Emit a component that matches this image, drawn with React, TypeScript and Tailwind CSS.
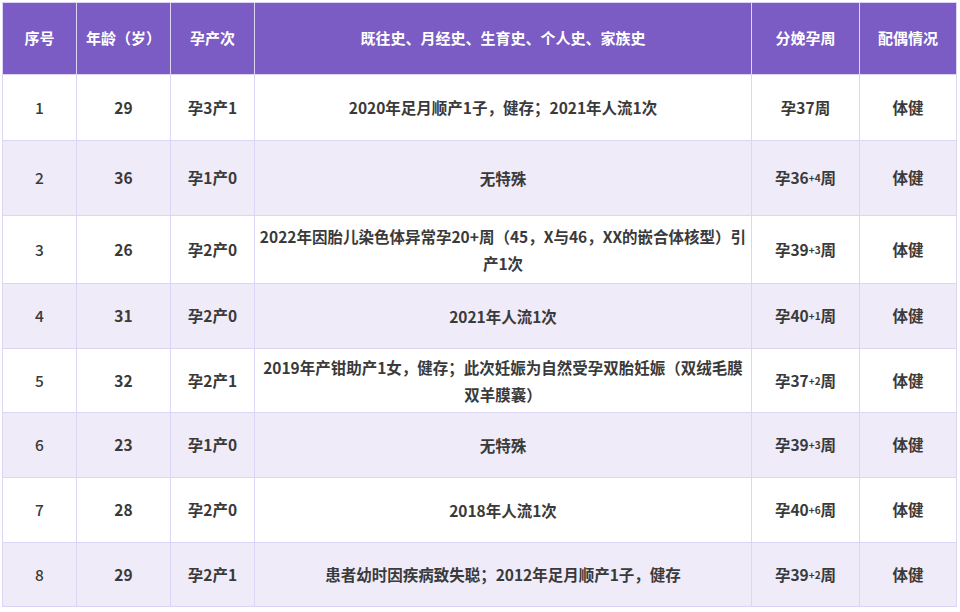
import React from 'react'

interface Row {
  no: number;
  age: number;
  gp: string;
  history: string;
  week: number;
  plus?: number;
  spouse: string;
  h: string;
}

const rows: Row[] = [
  { no: 1, age: 29, gp: '孕3产1', history: '2020年足月顺产1子，健存；2021年人流1次', week: 37, spouse: '体健', h: 'h-[66px]' },
  { no: 2, age: 36, gp: '孕1产0', history: '无特殊', week: 36, plus: 4, spouse: '体健', h: 'h-[75px]' },
  { no: 3, age: 26, gp: '孕2产0', history: '2022年因胎儿染色体异常孕20+周（45，X与46，XX的嵌合体核型）引产1次', week: 39, plus: 3, spouse: '体健', h: 'h-[68px]' },
  { no: 4, age: 31, gp: '孕2产0', history: '2021年人流1次', week: 40, plus: 1, spouse: '体健', h: 'h-[65px]' },
  { no: 5, age: 32, gp: '孕2产1', history: '2019年产钳助产1女，健存；此次妊娠为自然受孕双胎妊娠（双绒毛膜双羊膜囊）', week: 37, plus: 2, spouse: '体健', h: 'h-[64px]' },
  { no: 6, age: 23, gp: '孕1产0', history: '无特殊', week: 39, plus: 3, spouse: '体健', h: 'h-[65px]' },
  { no: 7, age: 28, gp: '孕2产0', history: '2018年人流1次', week: 40, plus: 6, spouse: '体健', h: 'h-[65px]' },
  { no: 8, age: 29, gp: '孕2产1', history: '患者幼时因疾病致失聪；2012年足月顺产1子，健存', week: 39, plus: 2, spouse: '体健', h: 'h-[64px]' },
]

const headers = ['序号', '年龄（岁）', '孕产次', '既往史、月经史、生育史、个人史、家族史', '分娩孕周', '配偶情况']
const widths = ['w-[74px]', 'w-[94px]', 'w-[84px]', 'w-[497px]', 'w-[108px]', 'w-[97px]']

const td = 'border border-[#ddd5f6] text-center align-middle px-[6px]'

export default function App() {
  return (
    <div
      className="w-[960px] h-[612px] bg-white pt-[2px] pl-[2px] text-[15.5px] text-[#3a3a3a]"
      style={{ fontFamily: '"Noto Sans CJK SC", "Liberation Sans", sans-serif' }}
    >
      <table className="table-fixed border-collapse w-[954px]">
        <colgroup>
          {widths.map((w, i) => (
            <col key={i} className={w} />
          ))}
        </colgroup>
        <thead>
          <tr className="h-[72px] bg-[#7b5bc4]">
            {headers.map((h) => (
              <th key={h} className={`${td} text-white font-bold text-[15px]`}>
                {h}
              </th>
            ))}
          </tr>
        </thead>
        <tbody className="font-semibold">
          {rows.map((r) => (
            <tr key={r.no} className={`${r.h} ${r.no % 2 === 0 ? 'bg-[#efebf8]' : 'bg-white'}`}>
              <td className={`${td} font-medium`}>{r.no}</td>
              <td className={td}>{r.age}</td>
              <td className={td}>{r.gp}</td>
              <td className="border border-[#ddd5f6] text-center align-middle px-[1px] leading-[27px]">
                {r.history}
              </td>
              <td className={td}>
                孕{r.week}
                {r.plus !== undefined && (
                  <sup className="text-[10px] relative -top-[2px]">+{r.plus}</sup>
                )}
                周
              </td>
              <td className={td}>{r.spouse}</td>
            </tr>
          ))}
        </tbody>
      </table>
    </div>
  )
}
